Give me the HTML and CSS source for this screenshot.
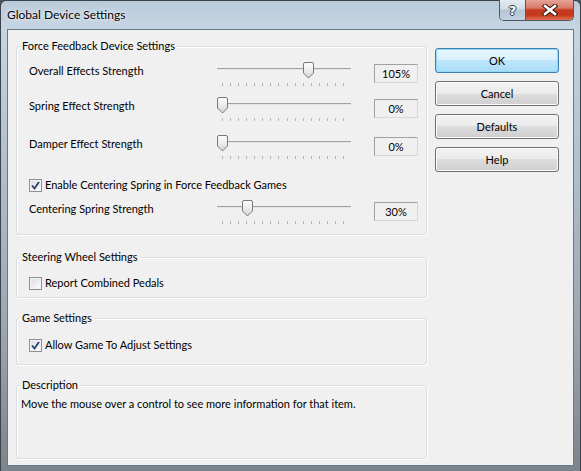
FILE: index.html
```html
<!DOCTYPE html>
<html>
<head>
<meta charset="utf-8">
<title>Global Device Settings</title>
<link rel="stylesheet" href="styles.css">
</head>
<body>
<div class="window">
  <div class="titlebar">
    <span class="title">Global Device Settings</span>
    <div class="caption-buttons">
      <span class="cap-btn help">?</span>
      <span class="cap-btn close">
        <svg width="16" height="12" viewBox="0 0 16 12">
          <path d="M3 2 L13 10 M13 2 L3 10" stroke="#3a1a14" stroke-width="4.6" stroke-linecap="square" fill="none"/>
          <path d="M3 2 L13 10 M13 2 L3 10" stroke="#ffffff" stroke-width="2.6" stroke-linecap="square" fill="none"/>
        </svg>
      </span>
    </div>
  </div>
  <div class="client">
    <div class="groups">
      <div class="group g-ff">
        <div class="legend">Force Feedback Device Settings</div>
        <div class="row r1">
          <span class="label">Overall Effects Strength</span>
          <div class="slider">
            <div class="track"></div>
            <div class="ticks"><i></i><i></i><i></i><i></i><i></i><i></i><i></i><i></i><i></i><i></i><i></i><i></i><i></i><i></i><i></i><i></i></div>
            <svg class="thumb" style="left:86px" width="11" height="17" viewBox="0 0 11 17"><defs><linearGradient id="tg1" x1="0" y1="0" x2="0" y2="1"><stop offset="0" stop-color="#fdfdfd"/><stop offset="0.5" stop-color="#ececec"/><stop offset="1" stop-color="#d2d2d2"/></linearGradient></defs><path d="M2 0.5 H9 Q10.5 0.5 10.5 2 V11 L5.5 16 L0.5 11 V2 Q0.5 0.5 2 0.5 Z" fill="url(#tg1)" stroke="#7a7a7a"/></svg>
          </div>
          <div class="value">105%</div>
        </div>
        <div class="row r2">
          <span class="label">Spring Effect Strength</span>
          <div class="slider">
            <div class="track"></div>
            <div class="ticks"><i></i><i></i><i></i><i></i><i></i><i></i><i></i><i></i><i></i><i></i><i></i><i></i><i></i><i></i><i></i><i></i></div>
            <svg class="thumb" style="left:0px" width="11" height="17" viewBox="0 0 11 17"><path d="M2 0.5 H9 Q10.5 0.5 10.5 2 V11 L5.5 16 L0.5 11 V2 Q0.5 0.5 2 0.5 Z" fill="url(#tg1)" stroke="#7a7a7a"/></svg>
          </div>
          <div class="value">0%</div>
        </div>
        <div class="row r3">
          <span class="label">Damper Effect Strength</span>
          <div class="slider">
            <div class="track"></div>
            <div class="ticks"><i></i><i></i><i></i><i></i><i></i><i></i><i></i><i></i><i></i><i></i><i></i><i></i><i></i><i></i><i></i><i></i></div>
            <svg class="thumb" style="left:0px" width="11" height="17" viewBox="0 0 11 17"><path d="M2 0.5 H9 Q10.5 0.5 10.5 2 V11 L5.5 16 L0.5 11 V2 Q0.5 0.5 2 0.5 Z" fill="url(#tg1)" stroke="#7a7a7a"/></svg>
          </div>
          <div class="value">0%</div>
        </div>
        <label class="check c-center">
          <span class="box checked"><svg width="11" height="11" viewBox="0 0 11 11"><path d="M2 5.5 L4.5 8.5 L9 2" stroke="#2e4270" stroke-width="1.9" fill="none"/></svg></span>
          <span>Enable Centering Spring in Force Feedback Games</span>
        </label>
        <div class="row r4">
          <span class="label">Centering Spring Strength</span>
          <div class="slider">
            <div class="track"></div>
            <div class="ticks"><i></i><i></i><i></i><i></i><i></i><i></i><i></i><i></i><i></i><i></i><i></i><i></i><i></i><i></i><i></i><i></i></div>
            <svg class="thumb" style="left:25px" width="11" height="17" viewBox="0 0 11 17"><path d="M2 0.5 H9 Q10.5 0.5 10.5 2 V11 L5.5 16 L0.5 11 V2 Q0.5 0.5 2 0.5 Z" fill="url(#tg1)" stroke="#7a7a7a"/></svg>
          </div>
          <div class="value">30%</div>
        </div>
      </div>

      <div class="group g-wheel">
        <div class="legend">Steering Wheel Settings</div>
        <label class="check">
          <span class="box"></span>
          <span>Report Combined Pedals</span>
        </label>
      </div>

      <div class="group g-game">
        <div class="legend">Game Settings</div>
        <label class="check">
          <span class="box checked"><svg width="11" height="11" viewBox="0 0 11 11"><path d="M2 5.5 L4.5 8.5 L9 2" stroke="#2e4270" stroke-width="1.9" fill="none"/></svg></span>
          <span>Allow Game To Adjust Settings</span>
        </label>
      </div>

      <div class="group g-desc">
        <div class="legend">Description</div>
        <div class="desc-text">Move the mouse over a control to see more information for that item.</div>
      </div>
    </div>

    <div class="buttons">
      <button class="btn default">OK</button>
      <button class="btn">Cancel</button>
      <button class="btn">Defaults</button>
      <button class="btn">Help</button>
    </div>
  </div>
</div>
</body>
</html>
```

FILE: styles.css
```css
* { box-sizing: border-box; }

html, body {
  margin: 0;
  padding: 0;
}

body {
  width: 581px;
  height: 471px;
  overflow: hidden;
  background: #4d545b;
  font-family: Lato, "Open Sans", sans-serif;
  font-size: 11px;
  color: #000;
}

.window {
  width: 581px;
  height: 471px;
  display: flex;
  flex-direction: column;
  padding: 0 6px 5px 6px;
  border: 1px solid #3b4249;
  border-bottom: none;
  border-radius: 6px 6px 0 0;
  background: linear-gradient(to bottom, #b9cadb 0, #c6d5e3 28px, #b2c0cd 160px, #99a4ae 340px, #7b838b 471px);
}

.titlebar {
  height: 28px;
  display: flex;
  align-items: flex-start;
}

.title {
  padding-top: 6px;
  font-size: 12px;
  line-height: 16px;
  color: #000;
  text-shadow: 0 0 6px rgba(255, 255, 255, 0.9), 0 0 2px rgba(255, 255, 255, 0.9);
}

.caption-buttons {
  margin-left: auto;
  margin-right: 0;
  margin-top: -1px;
  display: flex;
  height: 21px;
  border: 1px solid #4c5866;
  border-top: none;
  border-radius: 0 0 5px 5px;
  overflow: hidden;
}

.cap-btn {
  display: flex;
  align-items: center;
  justify-content: center;
  height: 20px;
}

.help {
  width: 26px;
  border-right: 1px solid #4c5866;
  background: linear-gradient(to bottom, #e3ebf2 0, #d1dce7 45%, #b6c5d4 50%, #c3d1de 100%);
  color: #fff;
  font-weight: bold;
  font-size: 13px;
  font-family: "DejaVu Sans", sans-serif;
  text-shadow: 1px 0 0 #2d3a48, -1px 0 0 #2d3a48, 0 1px 0 #2d3a48, 0 -1px 0 #2d3a48;
}

.close {
  width: 47px;
  background: linear-gradient(to bottom, #e6a597 0, #d87a66 40%, #c4391d 50%, #c53a1d 75%, #dd6f50 100%);
}

.client {
  flex: 1;
  display: flex;
  gap: 8px;
  padding: 16px 0 0 8px;
  background: #f0f0f0;
  border: 1px solid #6b7886;
}

.groups {
  width: 411px;
  display: flex;
  flex-direction: column;
}

.group {
  border: 1px solid #d5dfe5;
  border-radius: 3px;
  box-shadow: inset 1px 1px 0 #ffffff, 1px 1px 0 #ffffff;
  padding-left: 12px;
}

.legend {
  width: fit-content;
  margin: -9px 0 0 -9px;
  padding: 0 2px;
  line-height: 16px;
  background: #f0f0f0;
}

.g-ff { padding-bottom: 8px; }
.g-wheel { margin-top: 22px; padding-bottom: 6px; }
.g-game { margin-top: 20px; padding-bottom: 11px; }
.g-desc { margin-top: 20px; padding-bottom: 46px; }

.row {
  display: flex;
  align-items: flex-start;
  height: 26px;
}

.r1 { margin-top: 8px; }
.r2 { margin-top: 9px; }
.r3 { margin-top: 12px; }
.r4 { margin-top: 7px; }

.label {
  width: 188px;
  padding-top: 1px;
  line-height: 16px;
}

.slider {
  position: relative;
  width: 134px;
  height: 26px;
}

.track {
  margin-top: 6px;
  height: 2px;
  border-top: 1px solid #a3a3a3;
  border-bottom: 1px solid #e4e4e4;
}

.ticks {
  margin: 13px 0 0 5px;
  width: 122px;
  height: 3px;
  display: flex;
  justify-content: space-between;
}

.ticks i {
  width: 1px;
  height: 3px;
  background: #b4b4b4;
}

.thumb {
  position: absolute;
  top: 0;
  display: block;
}

.value {
  margin: 2px 0 0 23px;
  width: 44px;
  height: 19px;
  line-height: 17px;
  text-align: center;
  border: 1px solid;
  border-color: #a0a0a0 #d8d8d8 #d8d8d8 #a0a0a0;
}

.check {
  display: flex;
  align-items: center;
  gap: 3px;
  height: 16px;
  line-height: 16px;
}

.c-center { margin-top: 16px; }
.g-wheel .check { margin-top: 10px; }
.g-game .check { margin-top: 11px; }

.box {
  width: 13px;
  height: 13px;
  border: 1px solid #8e8f8f;
  background: linear-gradient(135deg, #d7dbe0 0, #eef0f2 60%, #fbfbfb 100%);
  box-shadow: inset 0 0 0 1px #f4f4f4;
  display: flex;
  align-items: center;
  justify-content: center;
}

.box svg { display: block; }

.desc-text {
  margin: 3px 0 0 -8px;
  line-height: 16px;
}

.buttons {
  width: 124px;
  margin-top: 2px;
  display: flex;
  flex-direction: column;
  gap: 8px;
}

.btn {
  height: 25px;
  padding: 0;
  font: inherit;
  color: #000;
  border: 1px solid #707070;
  border-radius: 3px;
  background: linear-gradient(to bottom, #f2f2f2 0, #ebebeb 50%, #dddddd 50%, #cfcfcf 100%);
  box-shadow: inset 0 0 0 1px #fbfbfb;
}

.btn.default {
  border-color: #3c7fb1;
  background: linear-gradient(to bottom, #e5f5fd 0, #d9f0fc 50%, #bee6fd 50%, #a9dcf6 100%);
  box-shadow: inset 0 0 0 1px #92d8f8;
}
```
